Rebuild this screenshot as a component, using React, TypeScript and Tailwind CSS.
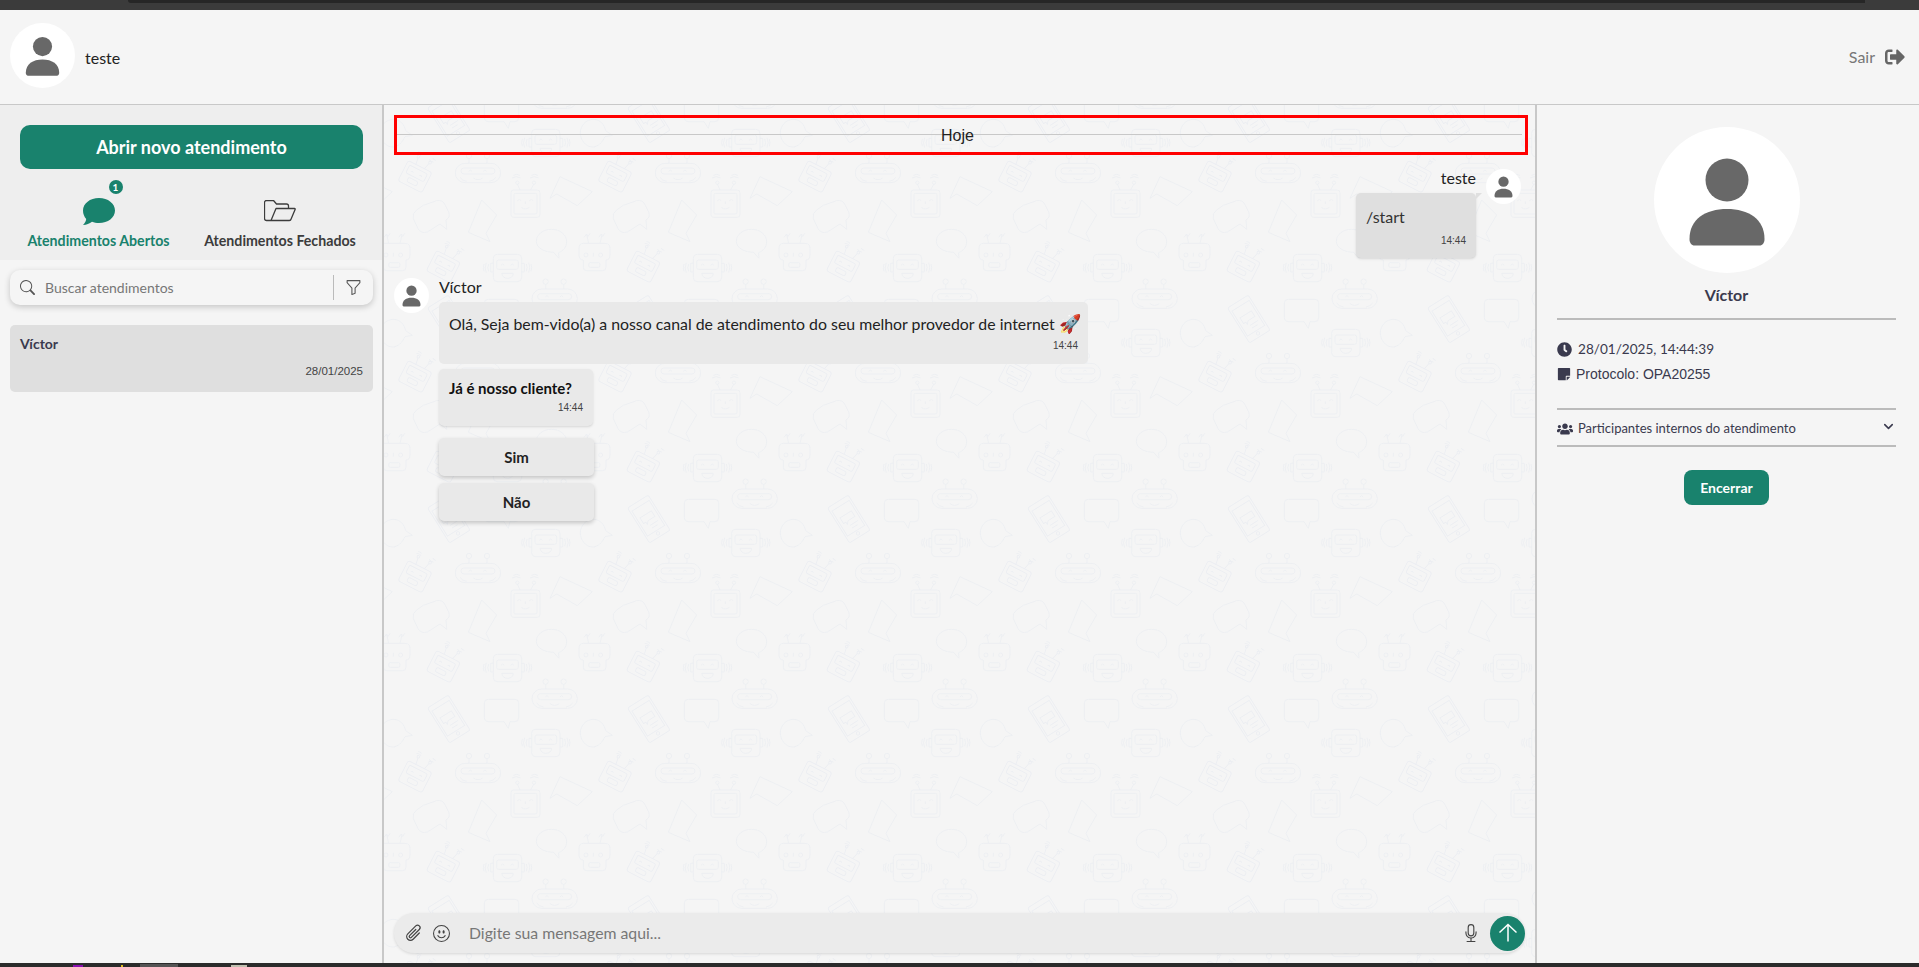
import { BsEmojiSmile, BsFunnel, BsMic, BsPaperclip, BsSearch } from 'react-icons/bs';
import { FaClock, FaSignOutAlt, FaStickyNote, FaUsers } from 'react-icons/fa';
import { FiChevronDown } from 'react-icons/fi';

const lato = 'font-["Lato","Noto_Sans",sans-serif]';

const Person = ({ className }: { className: string }) => (
  <svg viewBox="0 0 146 146" className={className} fill="#686868">
    <circle cx="73" cy="53" r="21.5" />
    <path d="M35.5 112c0-20 16-30 37.5-30s37.5 10 37.5 30c0 4-2 6.500-5 6.500h-65c-3 0-5-2.500-5-6.500z" />
  </svg>
);

const Avatar = ({ size }: { size: string }) => (
  <div className={`${size} shrink-0 rounded-full bg-white`}>
    <Person className="h-full w-full" />
  </div>
);

const WideBot = ({ x, y }: { x: number; y: number }) => (
  <g transform={`translate(${x} ${y})`}>
    <rect x="226" y="40" width="136" height="58" rx="29" />
    <rect x="243" y="54" width="102" height="18" rx="9" />
    <path d="M267 26v14M321 26v14M240 82q6 10 20 12M348 82q-6 10-20 12M280 84q14 10 28 0M266 64q5-8 10 0M310 64q5-8 10 0" />
    <circle cx="267" cy="18" r="8" />
    <circle cx="321" cy="18" r="8" />
  </g>
);

const TiltBot = ({ x, y }: { x: number; y: number }) => (
  <g transform={`translate(${x} ${y}) rotate(27)`}>
    <rect x="-40" y="-34" width="80" height="68" rx="8" />
    <rect x="-30" y="-24" width="60" height="26" rx="5" />
    <rect x="-16" y="10" width="32" height="14" rx="5" />
    <path d="M-18-8q4-6 8 0M10-8q4-6 8 0M-14-34l-4-22M14-34l6-22M-28-64q8-5 16 0M-26-71q6-4 12 0M14-66q6 4 16 2M22-74q6 4 12 2" />
    <circle cx="-18" cy="-58" r="4" />
    <circle cx="21" cy="-58" r="4" />
  </g>
);

const EarBot = ({ x, y }: { x: number; y: number }) => (
  <g transform={`translate(${x} ${y})`}>
    <rect x="340" y="313" width="85" height="82" rx="12" />
    <rect x="350" y="330" width="65" height="28" rx="6" />
    <path d="M365 370h35q-2 15-17 15t-18-15zM363 346q5-8 10 0M392 346q5-8 10 0M340 340h-8v26h8M425 340h8v26h-8M326 342q-5 11 0 22M319 338q-7 15 0 30M312 342q-4 11 0 22M439 342q5 11 0 22M446 338q7 15 0 30M453 342q4 11 0 22" />
  </g>
);

const Tile = () => (
  <g fill="none">
    <TiltBot x={105} y={80} />
    <WideBot x={0} y={0} />
    <WideBot x={230} y={377} />
    <rect x="393" y="120" width="87" height="82" rx="8" />
    <rect x="402" y="130" width="69" height="62" rx="4" />
    <path d="M420 120l-8-18M452 120l10-18M396 84q14-8 26 0M400 76q10-6 20 0M450 84q14-8 26 0M454 76q10-6 20 0M412 152q6-7 12 0M448 152q6-7 12 0M424 172q12 10 24 0M436 154v8" />
    <circle cx="412" cy="98" r="5" />
    <circle cx="462" cy="98" r="5" />
    <path d="M540 80l97 45-45 42-62-35-20 13z" />
    <path d="M130 166l40-14q18-4 26 14l10 20q6 16-8 24l2 28-20-16-38 24q-18 6-28-10l-14-30q-4-16 10-26z" />
    <path d="M305 150l45 45-32 55 12 25-65-28z" />
    <path d="M597 295q0-15 14-15h64q15 0 15 15v20q0 15-12 15v22q0 10-10 10h-48q-10 0-10-10v-22q-13 0-13-15z" />
    <rect x="626" y="338" width="34" height="14" rx="5" />
    <path d="M626 280l-6-26M660 280l6-26M612 262l8-10 4 8 6-10M656 262l8-10 4 8 6-10M640 308v12" />
    <circle cx="618" cy="315" r="6" />
    <circle cx="662" cy="315" r="6" />
    <TiltBot x={190} y={350} />
    <path d="M515 238c25 0 45 16 45 37 0 16-10 27-24 33l1 17-16-18c-25 0-52-12-52-33 0-21 21-36 46-36z" />
    <EarBot x={0} y={0} />
    <EarBot x={115} y={225} />
    <g transform="rotate(-32 207 507)">
      <rect x="170" y="445" width="73" height="124" rx="6" />
      <rect x="176" y="460" width="61" height="88" />
      <circle cx="207" cy="558" r="5" />
      <path d="M186 490h40v20h-24l-8 8v-8h-8zM200 525h28M200 535h20" />
    </g>
    <path d="M325 448h80q11 0 11 11v45q0 11-11 11h-15l-5 20-13-20h-47q-12 0-12-11v-45q0-11 12-11z" />
    <path d="M640 508c22 0 34 18 37 34l20 14-22 4c-8 18-22 31-37 31-22 0-37-22-37-42 0-22 17-41 39-41z" />
  </g>
);

const Wallpaper = () => (
  <svg className="pointer-events-none absolute inset-0 h-full w-full" aria-hidden>
    <defs>
      <pattern id="bots" x="-4" y="45" width="200" height="200" patternUnits="userSpaceOnUse">
        <g transform="scale(0.3333)" stroke="#eceef2" strokeWidth="2.700">
          <Tile />
          <g transform="translate(-600 0)">
            <Tile />
          </g>
          <g transform="translate(0 -600)">
            <Tile />
          </g>
        </g>
      </pattern>
    </defs>
    <rect width="100%" height="100%" fill="url(#bots)" />
  </svg>
);

const Sidebar = () => (
  <aside className="flex w-[384px] shrink-0 flex-col border-r-2 border-[#c8c8c8]">
    <div className="h-[155px] bg-[#eeeeee] px-5 pt-5">
      <button className="h-[44px] w-[343px] rounded-[10px] bg-[#19826d] text-lg font-bold text-white">
        Abrir novo atendimento
      </button>
      <div className="mt-[10px] flex">
        <div className="flex w-[157px] flex-col items-center text-[#19826d]">
          <div className="relative h-[47px] w-[32px]">
            <svg viewBox="0 0 32 29" className="absolute top-[18px] left-0 h-[29px] w-[32px]" fill="#19826d">
              <path d="M16 1c9 0 16 5.500 16 12.500S25 26 16 26c-2.500 0-5-.4-7-1.200C6.500 26.800 3.500 28 0 28c2-2 3-4 3.200-6C1.200 19.700 0 16.800 0 13.500 0 6.500 7 1 16 1z" />
            </svg>
            <span className="absolute top-[1px] left-[26px] flex h-[14px] w-[14px] items-center justify-center rounded-full bg-[#19826d] text-[10px] font-bold text-white">
              1
            </span>
          </div>
          <span className="mt-[5px] text-[14.2px] leading-5 font-bold whitespace-nowrap">Atendimentos Abertos</span>
        </div>
        <div className="ml-[23px] flex w-[160px] flex-col items-center text-[#3c3c3c]">
          <div className="h-[47px] w-[32px]">
            <svg viewBox="0 0 32 22" className="mt-[21px] h-[22px] w-[32px]" fill="none" stroke="#3c3c3c" strokeWidth="1.300" strokeLinejoin="round">
              <path d="M7 20.500H2.500a2 2 0 0 1-2-2V2.500a2 2 0 0 1 2-2h7l3 3.500h10a2 2 0 0 1 2 2V8.500M7 20.500l5-12h18.500q1 0 .6 1l-4 9.500a2 2 0 0 1-1.800 1.500z" />
            </svg>
          </div>
          <span className="mt-[5px] text-[14.2px] leading-5 font-bold whitespace-nowrap">Atendimentos Fechados</span>
        </div>
      </div>
    </div>
    <div className="pt-[10px] pr-[9px] pl-[10px]">
      <div className="flex h-[35px] items-center rounded-[10px] bg-[#f5f5f5] pl-[10px] shadow-[0_2px_6px_rgba(0,0,0,0.2)]">
        <BsSearch className="h-[15px] w-[15px] text-[#555]" />
        <span className="ml-[10px] flex-1 text-sm text-[#777]">Buscar atendimentos</span>
        <div className="h-[25px] w-px bg-[#bbb]" />
        <BsFunnel className="mx-[11px] h-[17px] w-[17px] text-[#555]" />
      </div>
      <div className="mt-[20px] h-[67px] rounded-[5px] bg-[#dfdfdf] px-[10px] pt-[10px]">
        <div className="text-sm leading-[17px] font-bold text-[#3a3a4e]">Víctor</div>
        <div className="mt-[11px] text-right font-['Liberation_Sans',sans-serif] text-[11.5px] text-[#444]">28/01/2025</div>
      </div>
    </div>
  </aside>
);

const Time = () => (
  <div className="text-right font-['Liberation_Sans',sans-serif] text-[10px] leading-3 text-[#444]">14:44</div>
);

const Chat = () => (
  <main className="relative flex min-w-0 flex-1 flex-col px-[10px] pt-[10px] pb-[10px]">
    <Wallpaper />
    <div className="relative flex h-[40px] w-[1134px] items-center justify-center border-[3px] border-[#ff0000]">
      <div className="absolute top-[16px] right-[3px] left-0 h-px bg-[#c8c8c8]" />
      <span className="relative mt-[1px] mr-[7px] font-['Liberation_Sans',sans-serif] text-base text-[#222]">Hoje</span>
    </div>

    <div className="relative mt-[14px] mr-[4px] flex justify-end">
      <div className="flex flex-col items-end">
        <span className="-mt-[1px] text-base leading-[20px] text-[#222]">teste</span>
        <div className="relative mt-[5px] h-[65px] w-[120px] rounded-[5px] bg-[#dfdfdf] px-[10px] pt-[14px] shadow-sm">
          <span className="absolute top-0 -right-[6px] h-0 w-0 border-t-[6px] border-r-[6px] border-t-[#dfdfdf] border-r-transparent" />
          <div className="text-base leading-[20px] text-[#333]">/start</div>
          <div className="mt-[8px]">
            <Time />
          </div>
        </div>
      </div>
      <div className="ml-[10px]">
        <Avatar size="h-[35px] w-[35px]" />
      </div>
    </div>

    <div className="relative mt-[20px] flex">
      <Avatar size="h-[35px] w-[35px]" />
      <div className="ml-[10px] flex flex-col items-start">
        <span className="-mt-[1px] text-base leading-[20px] text-[#222]">Víctor</span>
        <div className="mt-[5px] h-[62px] w-[649px] rounded-[5px] bg-[#e9e9e9] px-[10px] pt-[12px]">
          <div className="text-[15.85px] leading-[20px] whitespace-nowrap text-[#222]">
            Olá, Seja bem-vido(a) a nosso canal de atendimento do seu melhor provedor de internet{' '}
            <span className="text-[18px] leading-none">🚀</span>
          </div>
          <div className="mt-[6px]">
            <Time />
          </div>
        </div>
        <div className="mt-[5px] h-[57px] w-[154px] rounded-[5px] bg-[#e9e9e9] px-[10px] pt-[9px] shadow-sm">
          <div className="text-[15px] leading-[20px] font-bold text-[#111]">Já é nosso cliente?</div>
          <div className="mt-[4px]">
            <Time />
          </div>
        </div>
        <button className="mt-[12px] h-[38px] w-[155px] rounded-[5px] bg-[#e9e9e9] text-[15px] font-bold text-[#222] shadow-[0_2px_4px_rgba(0,0,0,0.2)]">
          Sim
        </button>
        <button className="mt-[7px] h-[38px] w-[155px] rounded-[5px] bg-[#e9e9e9] text-[15px] font-bold text-[#222] shadow-[0_2px_4px_rgba(0,0,0,0.2)]">
          Não
        </button>
      </div>
    </div>

    <div className="relative mt-auto flex h-[40px] w-[1131px] items-center rounded-full bg-[#ebebeb] pl-[10px] shadow-[0_1px_3px_rgba(0,0,0,0.12)]">
      <BsPaperclip className="h-[20px] w-[20px] rotate-45 text-[#444]" />
      <BsEmojiSmile className="ml-[9px] h-[17px] w-[17px] text-[#444]" />
      <span className="ml-[19px] flex-1 text-[15.8px] text-[#777]">Digite sua mensagem aqui...</span>
      <BsMic className="mr-[10px] h-[18px] w-[18px] text-[#444]" />
      <div className="flex h-[35px] w-[35px] items-center justify-center rounded-full bg-[#19826d]">
        <svg viewBox="0 0 20 20" className="h-[20px] w-[20px]" fill="none" stroke="white" strokeWidth="1.500">
          <path d="M10 18.500V1.500M1.500 9.500l8.500-8 8.500 8" />
        </svg>
      </div>
    </div>
  </main>
);

const Details = () => (
  <aside className="flex w-[384px] shrink-0 flex-col border-l-2 border-[#c8c8c8] pt-[22px] pr-[23px] pl-[20px]">
    <div className="flex justify-center">
      <Avatar size="h-[146px] w-[146px]" />
    </div>
    <div className="mt-[11px] text-center text-base leading-[22px] font-bold text-[#3a3a4e]">Víctor</div>
    <div className="mt-[12px] h-[2px] bg-[#bbbbbb]" />
    <div className="mt-[19px] flex h-[20px] items-center text-[13.6px] text-[#3a3a4e]">
      <FaClock className="h-[15px] w-[15px]" />
      <span className="ml-[6px]">28/01/2025, 14:44:39</span>
    </div>
    <div className="mt-[5px] flex h-[20px] items-center font-['Liberation_Sans',sans-serif] text-sm text-[#3a3a4e]">
      <FaStickyNote className="h-[14px] w-[14px]" />
      <span className="ml-[5px]">Protocolo: OPA20255</span>
    </div>
    <div className="mt-[24px] h-[2px] bg-[#bbbbbb]" />
    <div className="flex h-[35px] items-center pt-[2px] text-[13px] text-[#3a3a4e]">
      <FaUsers className="h-[16px] w-[16px]" />
      <span className="ml-[5px] flex-1">Participantes internos do atendimento</span>
      <FiChevronDown className="mb-[5px] h-[15px] w-[15px]" strokeWidth={2.500} />
    </div>
    <div className="h-[2px] bg-[#bbbbbb]" />
    <div className="mt-[23px] flex justify-center">
      <button className="h-[35px] w-[85px] rounded-[8px] bg-[#19826d] text-sm font-bold text-white">Encerrar</button>
    </div>
  </aside>
);

export default function App() {
  return (
    <div className={`flex h-[967px] flex-col overflow-hidden bg-[#f5f5f5] ${lato}`}>
      <div className="h-[10px] bg-[#3b3b3b]">
        <div className="mr-[54px] ml-[128px] h-[3px] rounded-bl-[4px] bg-[#262626]" />
      </div>
      <header className="flex h-[95px] shrink-0 items-center border-b border-[#c8c8c8] pr-[14px] pl-[10px]">
        <div className="mb-[3px]">
          <Avatar size="h-[65px] w-[65px]" />
        </div>
        <span className="mt-[1px] ml-[10px] flex-1 text-base text-[#222]">teste</span>
        <span className="text-base text-[#777]">Sair</span>
        <FaSignOutAlt className="ml-[10px] h-[20px] w-[20px] text-[#666]" />
      </header>
      <div className="flex min-h-0 flex-1">
        <Sidebar />
        <Chat />
        <Details />
      </div>
      <div className="flex h-[4px] shrink-0 items-end bg-[#2b2b2b]">
        <span className="ml-[73px] h-[2px] w-[10px] bg-[#8a10b0]" />
        <span className="ml-[38px] h-[2px] w-[2px] bg-[#e0c020]" />
        <span className="ml-[17px] h-[3px] w-[38px] bg-[#555]" />
        <span className="ml-[53px] h-[2px] w-[16px] bg-[#c0c0b0]" />
      </div>
    </div>
  );
}
